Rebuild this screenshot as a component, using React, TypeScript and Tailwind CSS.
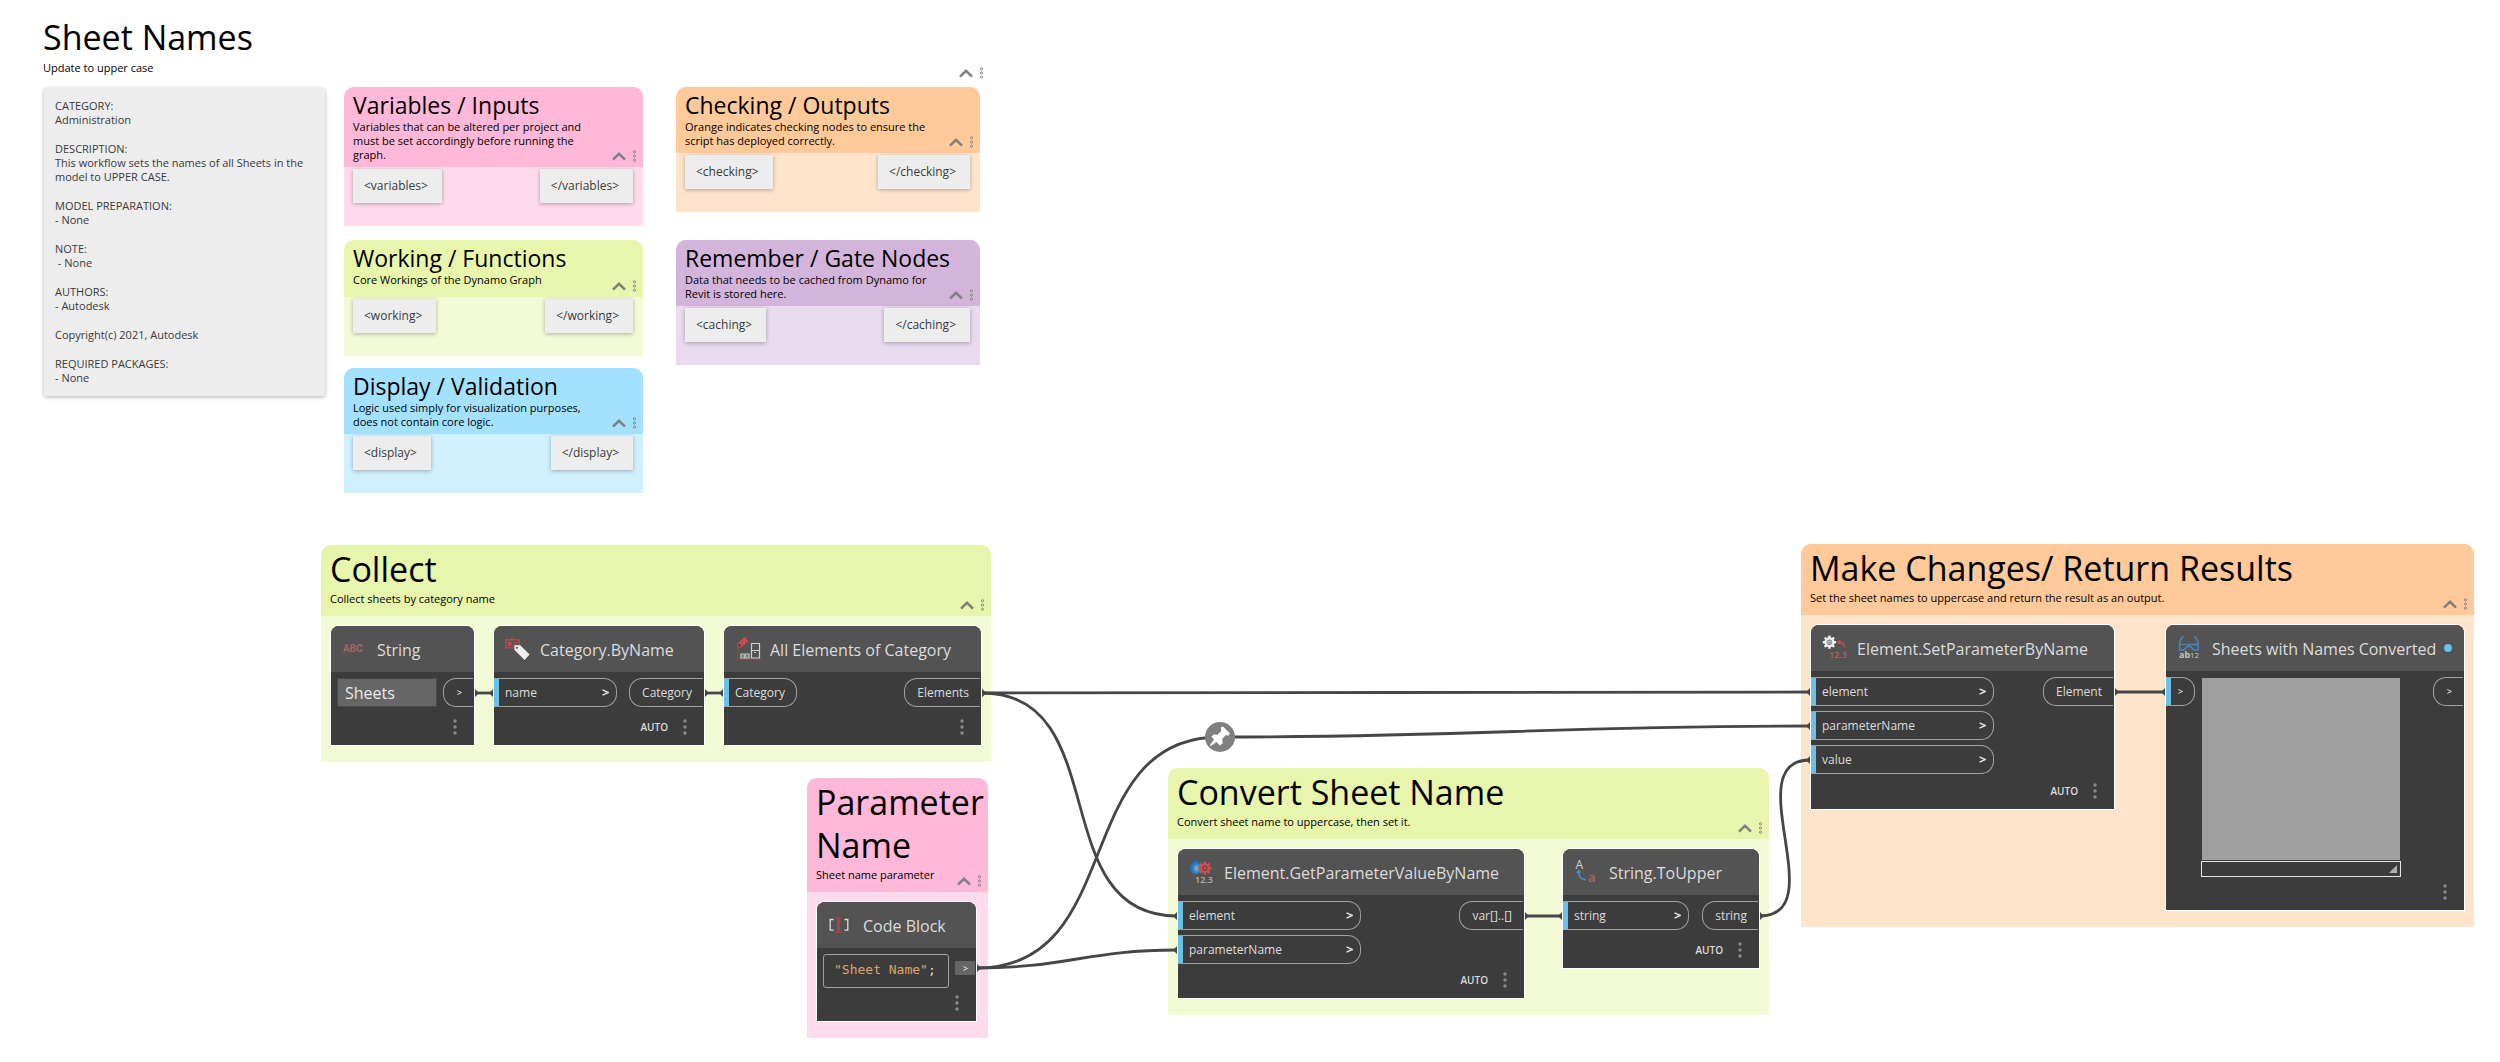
import React from "react";
import type { ReactNode } from "react";

const SANS = "font-['Open_Sans','Noto_Sans',sans-serif]";

/* ---------- shared controls ---------- */

function GroupControls({ label }: { label: string }) {
  return (
    <div className="flex items-center gap-[5px]">
      <button type="button" aria-label={`Collapse ${label}`} className="flex h-3 w-4 items-center justify-center">
        <svg width="14" height="9" viewBox="0 0 14 9" fill="none" stroke="#808080" strokeWidth="2.6">
          <path d="M1 7.6 7 1.9l6 5.7" />
        </svg>
      </button>
      <button type="button" aria-label={`${label} options`} className="flex h-3 w-[5px] items-center justify-center">
        <svg width="5" height="12" viewBox="0 0 5 12" fill="none" stroke="#808080" strokeWidth="0.9">
          <circle cx="2.5" cy="1.8" r="1.1" />
          <circle cx="2.5" cy="6" r="1.1" />
          <circle cx="2.5" cy="10.2" r="1.1" />
        </svg>
      </button>
    </div>
  );
}

function NodeMenu({ label }: { label: string }) {
  return (
    <button type="button" aria-label={`${label} menu`} className="flex h-4 w-2 items-center justify-center">
      <svg width="4" height="16" viewBox="0 0 4 16" fill="#8a8a8a">
        <circle cx="2" cy="2" r="1.7" />
        <circle cx="2" cy="8" r="1.7" />
        <circle cx="2" cy="14" r="1.7" />
      </svg>
    </button>
  );
}

/* ---------- groups ---------- */

type GroupProps = {
  place: string;
  head: string;
  body: string;
  title: string;
  text: string;
  large?: boolean;
  roomy?: boolean;
  children: ReactNode;
};

function Group({ place, head, body, title, text, large, roomy, children }: GroupProps) {
  return (
    <section className={`absolute flex flex-col rounded-t-[10px] ${place} ${body}`}>
      <header className={`rounded-t-[10px] pt-[3px] ${head}`}>
        <h2 className={`pl-[9px] ${large ? "mb-px text-[34px] leading-[43px]" : "text-[23px] leading-[30px]"}`}>{title}</h2>
        <div className="flex items-end justify-between gap-2 pl-[9px] pr-[6px]">
          <p className={`text-[11px] leading-[14px] ${large || roomy ? "pb-[10px]" : "pb-[5px]"}`}>{text}</p>
          <div className="pb-[5px]">
            <GroupControls label={title} />
          </div>
        </div>
      </header>
      {children}
    </section>
  );
}

function Tag({ children }: { children: ReactNode }) {
  return (
    <div className="bg-[#ededed] py-[10px] pl-[11px] pr-[14px] text-[12px] leading-[14px] text-[#3a3a3a] shadow-[0_1px_4px_rgba(0,0,0,0.3)]">
      {children}
    </div>
  );
}

function TagPair({ name }: { name: string }) {
  return (
    <div className="flex justify-between pl-[9px] pr-[10px] pt-[2px]">
      <Tag>{`<${name}>`}</Tag>
      <Tag>{`</${name}>`}</Tag>
    </div>
  );
}

/* ---------- nodes ---------- */

function InPort({ name, width, arrow = true }: { name?: string; width: string; arrow?: boolean }) {
  return (
    <div className={`flex h-[29px] items-center rounded-r-[13px] border-y border-r border-[#a0a0a0] text-[12px] leading-4 ${width}`}>
      <span className="h-full w-[5px] bg-[#6ac0e7]" />
      {name && <span className="pl-[6px]">{name}</span>}
      {arrow && <Arrow className={name ? "ml-auto mr-[7px] h-[7px] w-[7px]" : "ml-[7px] h-[5px] w-[5px]"} />}
    </div>
  );
}

function Arrow({ className }: { className: string }) {
  return (
    <svg className={className} viewBox="0 0 7 7" fill="none" stroke="#e0e0e0" strokeWidth="1.4">
      <path d="M0.5 0.8 6.2 3.5 0.5 6.2" />
    </svg>
  );
}

function OutPort({ name }: { name?: string }) {
  return (
    <div
      className={`mr-px flex h-[29px] items-center rounded-l-[13px] border-y border-l border-[#a0a0a0] text-[12px] leading-4 ${
        name ? "pl-3 pr-[11px]" : "w-[30px] pl-[13px]"
      }`}
    >
      {name ?? <Arrow className="h-[5px] w-[5px]" />}
    </div>
  );
}

type NodeProps = {
  size: string;
  icon: ReactNode;
  title: string;
  auto?: boolean;
  changed?: boolean;
  children: ReactNode;
};

function GraphNode({ size, icon, title, auto, changed, children }: NodeProps) {
  return (
    <article className={`flex flex-col rounded-t-[8px] bg-[#3c3c3c] text-[#dcdcdc] ring-1 ring-white ${size}`}>
      <header className="flex h-[46px] items-center rounded-t-[8px] bg-[#535353] pl-[11px]">
        <span className="flex w-[35px] shrink-0">{icon}</span>
        <h3 className="whitespace-nowrap pt-[2px] text-[16px] leading-5">{title}</h3>
        {changed && <span className="ml-auto mr-3 h-2 w-2 rounded-full bg-[#6ac0e7]" />}
      </header>
      <div className="flex items-start justify-between pt-[6px]">{children}</div>
      <footer className="mt-auto flex items-center justify-end gap-[13px] pb-[10px] pr-[15px]">
        {auto && <span className="text-[10px] font-semibold leading-4">AUTO</span>}
        <NodeMenu label={title} />
      </footer>
    </article>
  );
}

/* ---------- node icons ---------- */

const iconBox = { width: 26, height: 26, viewBox: "0 0 26 26", className: "overflow-visible" };

function IconAbc() {
  return (
    <svg {...iconBox}>
      <text x="1" y="16" fontSize="10" fontWeight="700" fontFamily="Roboto, sans-serif" fill="#a96464">ABC</text>
    </svg>
  );
}

function IconTag() {
  return (
    <svg {...iconBox}>
      <path d="M0.8 3.8h13.4v8H0.8zM7 1.5v2.3" fill="none" stroke="#c04848" strokeWidth="1.3" />
      <path d="M2.6 5.6h4v4.2h-4z" fill="#c04848" />
      <path d="M8 6.4h4.6M8 8.8h4" stroke="#c04848" strokeWidth="1.2" />
      <path d="M9.5 9.3h5.7L24.6 18.6l-5 5.4L9.5 14z" fill="#f0f0f0" />
      <circle cx="12" cy="11.8" r="1.1" fill="#4f5a63" />
    </svg>
  );
}

function IconElements() {
  return (
    <svg {...iconBox}>
      <path d="M2 8.2 9.4 0.8l4 4.2L6.4 11.4H2z" fill="#c84c4c" />
      <circle cx="4.2" cy="9.2" r="1.2" fill="#3f3f3f" />
      <path d="M3 12v11h22" fill="none" stroke="#c04848" strokeWidth="1" strokeDasharray="2 1.2" />
      <path d="M16.5 7.5h8v14.5h-8zM16.5 14.5h8M19 16.5h2" fill="none" stroke="#d0d0d0" strokeWidth="1.2" />
      <path d="M6 18h8v4H6zM10 18v4M7.5 20h5" fill="none" stroke="#d0d0d0" strokeWidth="1.2" />
    </svg>
  );
}

function IconCode() {
  return (
    <svg {...iconBox}>
      <path d="M5.5 7.5H2.2v10.6h3.3M16.500 7.500h3.300v10.600h-3.300" fill="none" stroke="#dcdcdc" strokeWidth="1.3" />
      <path d="M7 5.4h7M7 20.4h7" stroke="#b04040" strokeWidth="1.4" />
      <path d="M10.5 5v15.5" stroke="#b04040" strokeWidth="2.8" />
    </svg>
  );
}

const GEAR_TEETH = "M0-6.6V6.6M-6.6 0H6.6M-4.7-4.7 4.7 4.7M-4.7 4.7 4.7-4.7";

function IconGetParameter() {
  return (
    <svg {...iconBox}>
      <defs>
        <radialGradient id="ball" cx="0.6" cy="0.6" r="0.7">
          <stop offset="0" stopColor="#7db8e8" />
          <stop offset="0.5" stopColor="#2f78bb" />
          <stop offset="1" stopColor="#1f5288" />
        </radialGradient>
      </defs>
      <path d="M3.5 0.8h6l-0.8 2.4c2.4 1 4 3 4 5.6a6.2 6.2 0 1 1-8.4-5.7z" fill="url(#ball)" />
      <g transform="translate(15.8 9.2)">
        <path d={GEAR_TEETH} stroke="#d05050" strokeWidth="2.4" />
        <circle r="4.8" fill="#d05050" />
        <circle r="2.7" fill="#7d3a3a" />
        <circle r="1.4" fill="#d05050" />
      </g>
      <text x="6" y="24" fontSize="9" fontWeight="600" fontFamily="'Open Sans', sans-serif" fill="#b0b0b0">12.3</text>
    </svg>
  );
}

function IconSetParameter() {
  return (
    <svg {...iconBox}>
      <g transform="translate(7.4 7.2)">
        <path d={GEAR_TEETH} stroke="#f2f2f2" strokeWidth="2.4" />
        <circle r="5" fill="#f2f2f2" />
        <circle r="2.8" fill="#777" />
        <path d="M-2.4-0.9h4.8M-2.4 0.9h4.8" stroke="#e0e0e0" strokeWidth="0.9" />
      </g>
      <path d="M15.5 7.2c4-.6 7 1.5 7.4 5.2" fill="none" stroke="#c25252" strokeWidth="1.4" />
      <path d="M14 7.4l4.4-3v5.4z" fill="#c25252" />
      <text x="7" y="23" fontSize="9" fontWeight="600" fontFamily="'Open Sans', sans-serif" fill="#a96464">12.3</text>
    </svg>
  );
}

function IconToUpper() {
  return (
    <svg {...iconBox}>
      <text x="1.5" y="10" fontSize="12" fontFamily="'Open Sans', sans-serif" fill="#cfcfcf">A</text>
      <path d="M4.6 13c.2 4.5 2.6 7.4 7 7.8" fill="none" stroke="#4a90c8" strokeWidth="1.6" />
      <path d="M2 14.2l2.3-3.6 3.2 2.6z" fill="#4a90c8" />
      <text x="14" y="22.5" fontSize="13" fontWeight="600" fontFamily="'Open Sans', sans-serif" fill="#a96464">a</text>
    </svg>
  );
}

function IconWatch() {
  return (
    <svg {...iconBox}>
      <path d="M6.500 1.500C4 3 2.600 6 2.600 9.500v5.500h4.200l5-5 5 5h4.200V9.500c0-3.500-1.400-6.500-3.900-8M2.600 9.500h18.400" fill="none" stroke="#4a86bd" strokeWidth="1.5" />
      <text x="2" y="22.5" fontSize="9" fontWeight="700" fontFamily="'Open Sans', sans-serif" fill="#c4c4c4">ab</text>
      <text x="13" y="22.5" fontSize="8" fontFamily="'Open Sans', sans-serif" fill="#c4c4c4">12</text>
    </svg>
  );
}

/* ---------- wires ---------- */

const WIRES: [number, number, number, number][] = [
  [475, 693, 493, 693],
  [705, 693, 723, 693],
  [982, 693, 1810, 692],
  [982, 693, 1177, 916],
  [977, 968, 1177, 950],
  [1525, 916, 1562, 916],
  [1760, 916, 1810, 760],
  [2115, 692, 2165, 692],
];

function curve([x1, y1, x2, y2]: [number, number, number, number]) {
  const reach = 0.45 * Math.hypot(x2 - x1, y2 - y1);
  return `M${x1} ${y1}C${x1 + reach} ${y1} ${x2 - reach} ${y2} ${x2} ${y2}`;
}

function startCap(x: number, y: number) {
  return `M${x} ${y - 4}l3 3v2l-3 3z`;
}

function endCap(x: number, y: number) {
  return `M${x} ${y - 4}l-3 3v2l3 3z`;
}

function Wires() {
  return (
    <svg className="pointer-events-none absolute left-0 top-0" width="2500" height="1062" viewBox="0 0 2500 1062" aria-hidden="true">
      <g fill="none" stroke="#464646" strokeWidth="2.8">
        {WIRES.map((w) => (
          <path key={w.join()} d={curve(w)} />
        ))}
        <path d={curve([977, 968, 1220, 737])} />
        <path d={curve([1220, 737, 1810, 726])} />
      </g>
      <g fill="#464646">
        {WIRES.map(([x1, y1, x2, y2]) => (
          <path key={`${x1}-${y1}-${x2}-${y2}`} d={startCap(x1, y1) + endCap(x2, y2)} />
        ))}
        <path d={endCap(1810, 726)} />
      </g>
    </svg>
  );
}

function Pin() {
  return (
    <button type="button" aria-label="Wire pin" className="absolute left-[1205px] top-[722px] h-[30px] w-[30px] rounded-full bg-[#808080]">
      <svg width="30" height="30" viewBox="0 0 30 30" fill="#fff">
        <path d="M15.8 5.6 18 4.6l6.8 6.6-1.2 2.2-3-.1-3.4 3.800.5 4.200-3 2.200-3.200-3.400-5.700 4-1-.9 4.300-5.600-2.600-2.800 2-2.400 4.200.3 3.600-3.900z" />
      </svg>
    </button>
  );
}

/* ---------- workspace ---------- */

const NOTE: string[][] = [
  ["CATEGORY:", "Administration"],
  ["DESCRIPTION:", "This workflow sets the names of all Sheets in the model to UPPER CASE."],
  ["MODEL PREPARATION:", "- None"],
  ["NOTE:", " - None"],
  ["AUTHORS:", "- Autodesk"],
  ["Copyright(c) 2021, Autodesk"],
  ["REQUIRED PACKAGES:", "- None"],
];

const PINK = { head: "bg-[#ffb8d8]", body: "bg-[#ffdbeb]" };
const GREEN = { head: "bg-[#e8f5ad]", body: "bg-[#f3fad6]" };
const BLUE = { head: "bg-[#a4e1ff]", body: "bg-[#d1f0ff]" };
const ORANGE = { head: "bg-[#ffc999]", body: "bg-[#ffe4cc]" };
const PURPLE = { head: "bg-[#d3b5db]", body: "bg-[#e9daed]" };

export default function App() {
  return (
    <main className={`relative min-h-screen overflow-hidden bg-white text-black ${SANS}`}>
      <header className="absolute left-[43px] top-4">
        <h1 className="text-[34px] leading-[43px]">Sheet Names</h1>
        <p className="mt-[2px] text-[11px] leading-[14px]">Update to upper case</p>
      </header>
      <div className="absolute left-[958px] top-[67px]">
        <GroupControls label="Sheet Names" />
      </div>

      <aside className="absolute left-[44px] top-[88px] flex w-[281px] flex-col gap-[15px] rounded-[2px] bg-[#ededed] py-[11px] pl-[11px] pr-3 text-[11px] leading-[14px] text-[#3a3a3a] shadow-[0_1px_4px_rgba(0,0,0,0.3)]">
        {NOTE.map((lines) => (
          <div key={lines[0]} className="whitespace-pre-wrap">
            {lines.map((line) => (
              <p key={line}>{line}</p>
            ))}
          </div>
        ))}
      </aside>

      <Group place="left-[344px] top-[87px] h-[139px] w-[299px]" {...PINK} title="Variables / Inputs" text="Variables that can be altered per project and must be set accordingly before running the graph.">
        <TagPair name="variables" />
      </Group>
      <Group place="left-[344px] top-[240px] h-[116px] w-[299px]" {...GREEN} roomy title="Working / Functions" text="Core Workings of the Dynamo Graph">
        <TagPair name="working" />
      </Group>
      <Group place="left-[344px] top-[368px] h-[125px] w-[299px]" {...BLUE} title="Display / Validation" text="Logic used simply for visualization purposes, does not contain core logic.">
        <TagPair name="display" />
      </Group>
      <Group place="left-[676px] top-[87px] h-[125px] w-[304px]" {...ORANGE} title="Checking / Outputs" text="Orange indicates checking nodes to ensure the script has deployed correctly.">
        <TagPair name="checking" />
      </Group>
      <Group place="left-[676px] top-[240px] h-[125px] w-[304px]" {...PURPLE} title="Remember / Gate Nodes" text="Data that needs to be cached from Dynamo for Revit is stored here.">
        <TagPair name="caching" />
      </Group>

      <Group place="left-[321px] top-[545px] h-[217px] w-[670px]" {...GREEN} large title="Collect" text="Collect sheets by category name">
        <div className="flex gap-5 p-[10px]">
          <GraphNode size="h-[119px] w-[143px]" icon={<IconAbc />} title="String">
            <input
              aria-label="String value"
              defaultValue="Sheets"
              className="ml-[6px] h-[29px] w-[100px] border border-[#4a4a4a] bg-[#666] pl-[7px] text-[16px] text-[#ececec]"
            />
            <OutPort />
          </GraphNode>
          <GraphNode size="h-[119px] w-[210px]" icon={<IconTag />} title="Category.ByName" auto>
            <InPort name="name" width="w-[123px]" />
            <OutPort name="Category" />
          </GraphNode>
          <GraphNode size="h-[119px] w-[257px]" icon={<IconElements />} title="All Elements of Category">
            <InPort name="Category" width="w-[73px]" arrow={false} />
            <OutPort name="Elements" />
          </GraphNode>
        </div>
      </Group>

      <Group place="left-[807px] top-[778px] h-[260px] w-[181px]" {...PINK} large title="Parameter Name" text="Sheet name parameter">
        <div className="flex p-[10px]">
          <GraphNode size="h-[119px] w-[159px]" icon={<IconCode />} title="Code Block">
            <code className="ml-[6px] h-[34px] w-[126px] rounded-[3px] border border-[#a0a0a0] pl-[10px] font-['DejaVu_Sans_Mono',monospace] text-[13px] leading-[30px] text-[#dca468]">
              "Sheet Name"<span className="text-[#dcdcdc]">;</span>
            </code>
            <span className="mr-px mt-[7px] flex h-[14px] w-5 items-center justify-center bg-[#666]">
              <Arrow className="h-[5px] w-[5px]" />
            </span>
          </GraphNode>
        </div>
      </Group>

      <Group place="left-[1168px] top-[768px] h-[247px] w-[601px]" {...GREEN} large title="Convert Sheet Name" text="Convert sheet name to uppercase, then set it.">
        <div className="flex items-start justify-between p-[10px]">
          <GraphNode size="h-[149px] w-[346px]" icon={<IconGetParameter />} title="Element.GetParameterValueByName" auto>
            <div className="flex flex-col gap-[5px]">
              <InPort name="element" width="w-[183px]" />
              <InPort name="parameterName" width="w-[183px]" />
            </div>
            <OutPort name="var[]..[]" />
          </GraphNode>
          <GraphNode size="h-[119px] w-[196px]" icon={<IconToUpper />} title="String.ToUpper" auto>
            <InPort name="string" width="w-[126px]" />
            <OutPort name="string" />
          </GraphNode>
        </div>
      </Group>

      <Group place="left-[1801px] top-[544px] h-[383px] w-[673px]" {...ORANGE} large title="Make Changes/ Return Results" text="Set the sheet names to uppercase and return the result as an output.">
        <div className="flex items-start justify-between p-[10px]">
          <GraphNode size="h-[184px] w-[303px]" icon={<IconSetParameter />} title="Element.SetParameterByName" auto>
            <div className="flex flex-col gap-[5px]">
              <InPort name="element" width="w-[183px]" />
              <InPort name="parameterName" width="w-[183px]" />
              <InPort name="value" width="w-[183px]" />
            </div>
            <OutPort name="Element" />
          </GraphNode>
          <GraphNode size="h-[285px] w-[298px]" icon={<IconWatch />} title="Sheets with Names Converted" changed>
            <InPort width="w-[29px]" />
            <div className="mr-[26px] flex w-[200px] flex-col gap-px">
              <div className="mx-px mt-px h-[182px] bg-[#9f9f9f]" />
              <div className="flex h-4 items-center justify-end border border-[#e4e4e4] pr-[3px]">
                <svg width="8" height="8" viewBox="0 0 8 8" fill="#b0b0b0">
                  <path d="M8 0v8H0z" />
                </svg>
              </div>
            </div>
            <OutPort />
          </GraphNode>
        </div>
      </Group>

      <Wires />
      <Pin />
    </main>
  );
}
